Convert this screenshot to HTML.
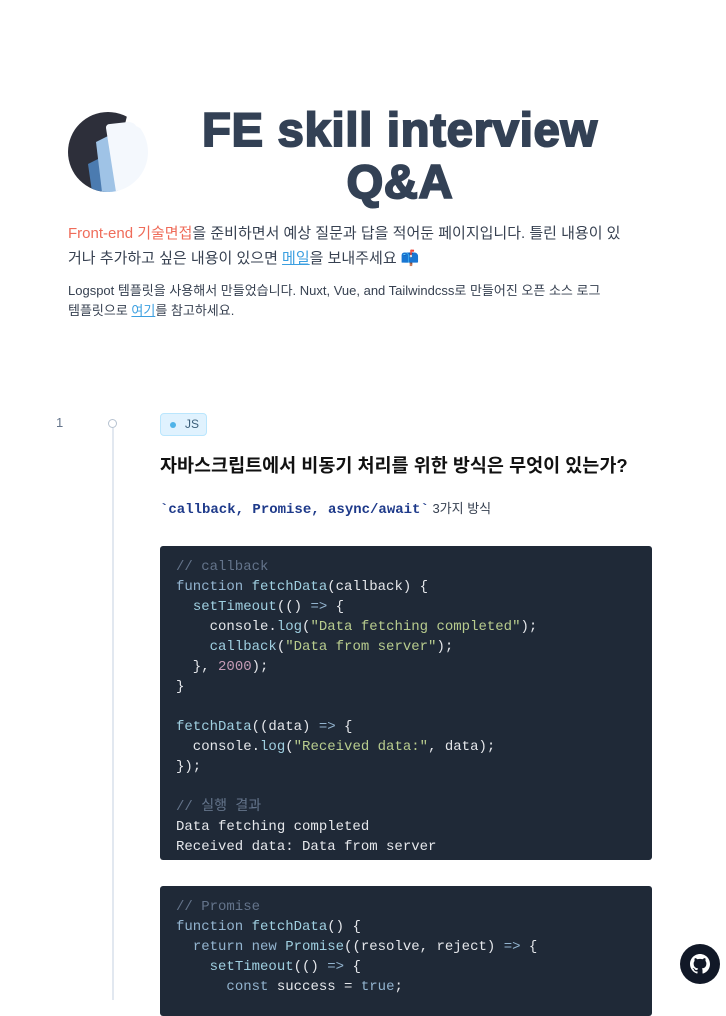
<!DOCTYPE html>
<html><head><meta charset="utf-8"><style>
*{margin:0;padding:0;box-sizing:border-box}
body{width:726px;height:1000px;overflow:hidden;background:#fff;font-family:"Liberation Sans","Noto Sans CJK KR",sans-serif;position:relative}
.abs{position:absolute}
.title{left:150px;width:500px;top:104px;text-align:center;font-weight:900;font-size:47px;line-height:52px;color:#334155;letter-spacing:0.8px;-webkit-text-stroke:2px #334155}
.p1{left:68px;top:221px;width:564px;font-size:15px;line-height:25px;color:#374151}
.p2{left:68px;top:281px;width:560px;font-size:13px;line-height:20px;color:#374151;word-break:keep-all}
a{color:#3b9fe0;text-decoration:underline}
.code{left:160px;width:492px;background:#1f2937;border-radius:3px;padding:11px 16px;font-family:"Liberation Mono",monospace;font-size:14px;line-height:20px;color:#e5e7eb;white-space:pre}
.c{color:#64748b}.k{color:#93b4cf}.f{color:#9fcfe0}.s{color:#b8cc8e}.n{color:#c59bb6}
</style></head><body>
<svg class="abs" style="left:68px;top:112px" width="80" height="80" viewBox="0 0 80 80">
<defs><clipPath id="cc"><circle cx="40" cy="40" r="40"/></clipPath></defs>
<g clip-path="url(#cc)">
<rect width="80" height="80" fill="#fff"/>
<path d="M0 0H60L40 80H0Z" fill="#2d2f3a"/>
<path d="M20 52L36 44L42 80H24Z" fill="#4b7bb0"/>
<path d="M28 30L44 22L50 80H34Z" fill="#9fc3e6"/>
<path d="M38 16Q38 12 42 12L60 10Q66 10 68 14L80 20V80H48Z" fill="#f4f8fd"/>
</g></svg>
<div class="abs title">FE skill interview<br>Q&amp;A</div>
<div class="abs p1"><span style="color:#ef6c5a">Front-end 기술면접</span>을 준비하면서 예상 질문과 답을 적어둔 페이지입니다. 틀린 내용이 있거나 추가하고 싶은 내용이 있으면 <a>메일</a>을 보내주세요 📫</div>
<div class="abs p2">Logspot 템플릿을 사용해서 만들었습니다. Nuxt, Vue, and Tailwindcss로 만들어진 오픈 소스 로그 템플릿으로 <a>여기</a>를 참고하세요.</div>
<div class="abs" style="left:56px;top:415px;font-size:13px;color:#64748b">1</div>
<div class="abs" style="left:108px;top:419px;width:9px;height:9px;border:1.5px solid #b6c2d0;border-radius:50%"></div>
<div class="abs" style="left:112px;top:428px;width:1.5px;height:572px;background:#e2e8f0"></div>
<div class="abs" style="left:160px;top:413px;width:47px;height:23px;background:#e0f2fe;border:1px solid #bae6fd;border-radius:4px;font-size:12px;color:#3b5f7a;line-height:21px;padding-left:24px">JS</div>
<div class="abs" style="left:170px;top:422px;width:6px;height:6px;border-radius:50%;background:#4fb3e8"></div>
<div class="abs" style="left:160px;top:452px;font-size:18.5px;font-weight:bold;color:#111">자바스크립트에서 비동기 처리를 위한 방식은 무엇이 있는가?</div>
<div class="abs" style="left:160px;top:498px;font-size:13px;color:#374151"><b style="font-family:'Liberation Mono',monospace;color:#1e3a8a;font-size:14px">`callback, Promise, async/await`</b> 3가지 방식</div>
<div class="abs code" style="top:546px;height:314px"><span class="c">// callback</span>
<span class="k">function</span> <span class="f">fetchData</span>(callback) {
  <span class="f">setTimeout</span>(() <span class="k">=&gt;</span> {
    console.<span class="f">log</span>(<span class="s">"Data fetching completed"</span>);
    <span class="f">callback</span>(<span class="s">"Data from server"</span>);
  }, <span class="n">2000</span>);
}

<span class="f">fetchData</span>((data) <span class="k">=&gt;</span> {
  console.<span class="f">log</span>(<span class="s">"Received data:"</span>, data);
});

<span class="c">// 실행 결과</span>
Data fetching completed
Received data: Data from server</div>
<div class="abs code" style="top:886px;height:130px"><span class="c">// Promise</span>
<span class="k">function</span> <span class="f">fetchData</span>() {
  <span class="k">return new</span> <span class="f">Promise</span>((resolve, reject) <span class="k">=&gt;</span> {
    <span class="f">setTimeout</span>(() <span class="k">=&gt;</span> {
      <span class="k">const</span> success = <span class="k">true</span>;</div>
<div class="abs" style="left:680px;top:944px;width:40px;height:40px;border-radius:50%;background:#111827"></div>
<svg class="abs" style="left:690px;top:954px" width="20" height="20" viewBox="0 0 16 16"><path fill="#fff" d="M8 0C3.580 0 0 3.58 0 8c0 3.54 2.29 6.53 5.47 7.59.4.07.55-.17.55-.38v-1.330c-2.23.48-2.7-1.07-2.7-1.070-.36-.93-.89-1.17-.89-1.17-.73-.5.06-.49.06-.49.8.06 1.230.83 1.23.83.71 1.22 1.87.87 2.33.66.07-.52.28-.87.5-1.07-1.78-.2-3.64-.89-3.64-3.95 0-.87.31-1.59.82-2.15-.08-.2-.36-1.02.08-2.12 0 0 .67-.21 2.2.82.64-.18 1.32-.27 2-.27.68 0 1.36.09 2 .27 1.53-1.04 2.2-.82 2.2-.82.44 1.1.16 1.92.08 2.12.51.56.82 1.27.82 2.15 0 3.07-1.87 3.75-3.65 3.95.29.25.54.73.54 1.48v2.2c0 .21.15.46.55.38A8.01 8.01 0 0016 8c0-4.420-3.58-8-8-8z"/></svg>
</body></html>
